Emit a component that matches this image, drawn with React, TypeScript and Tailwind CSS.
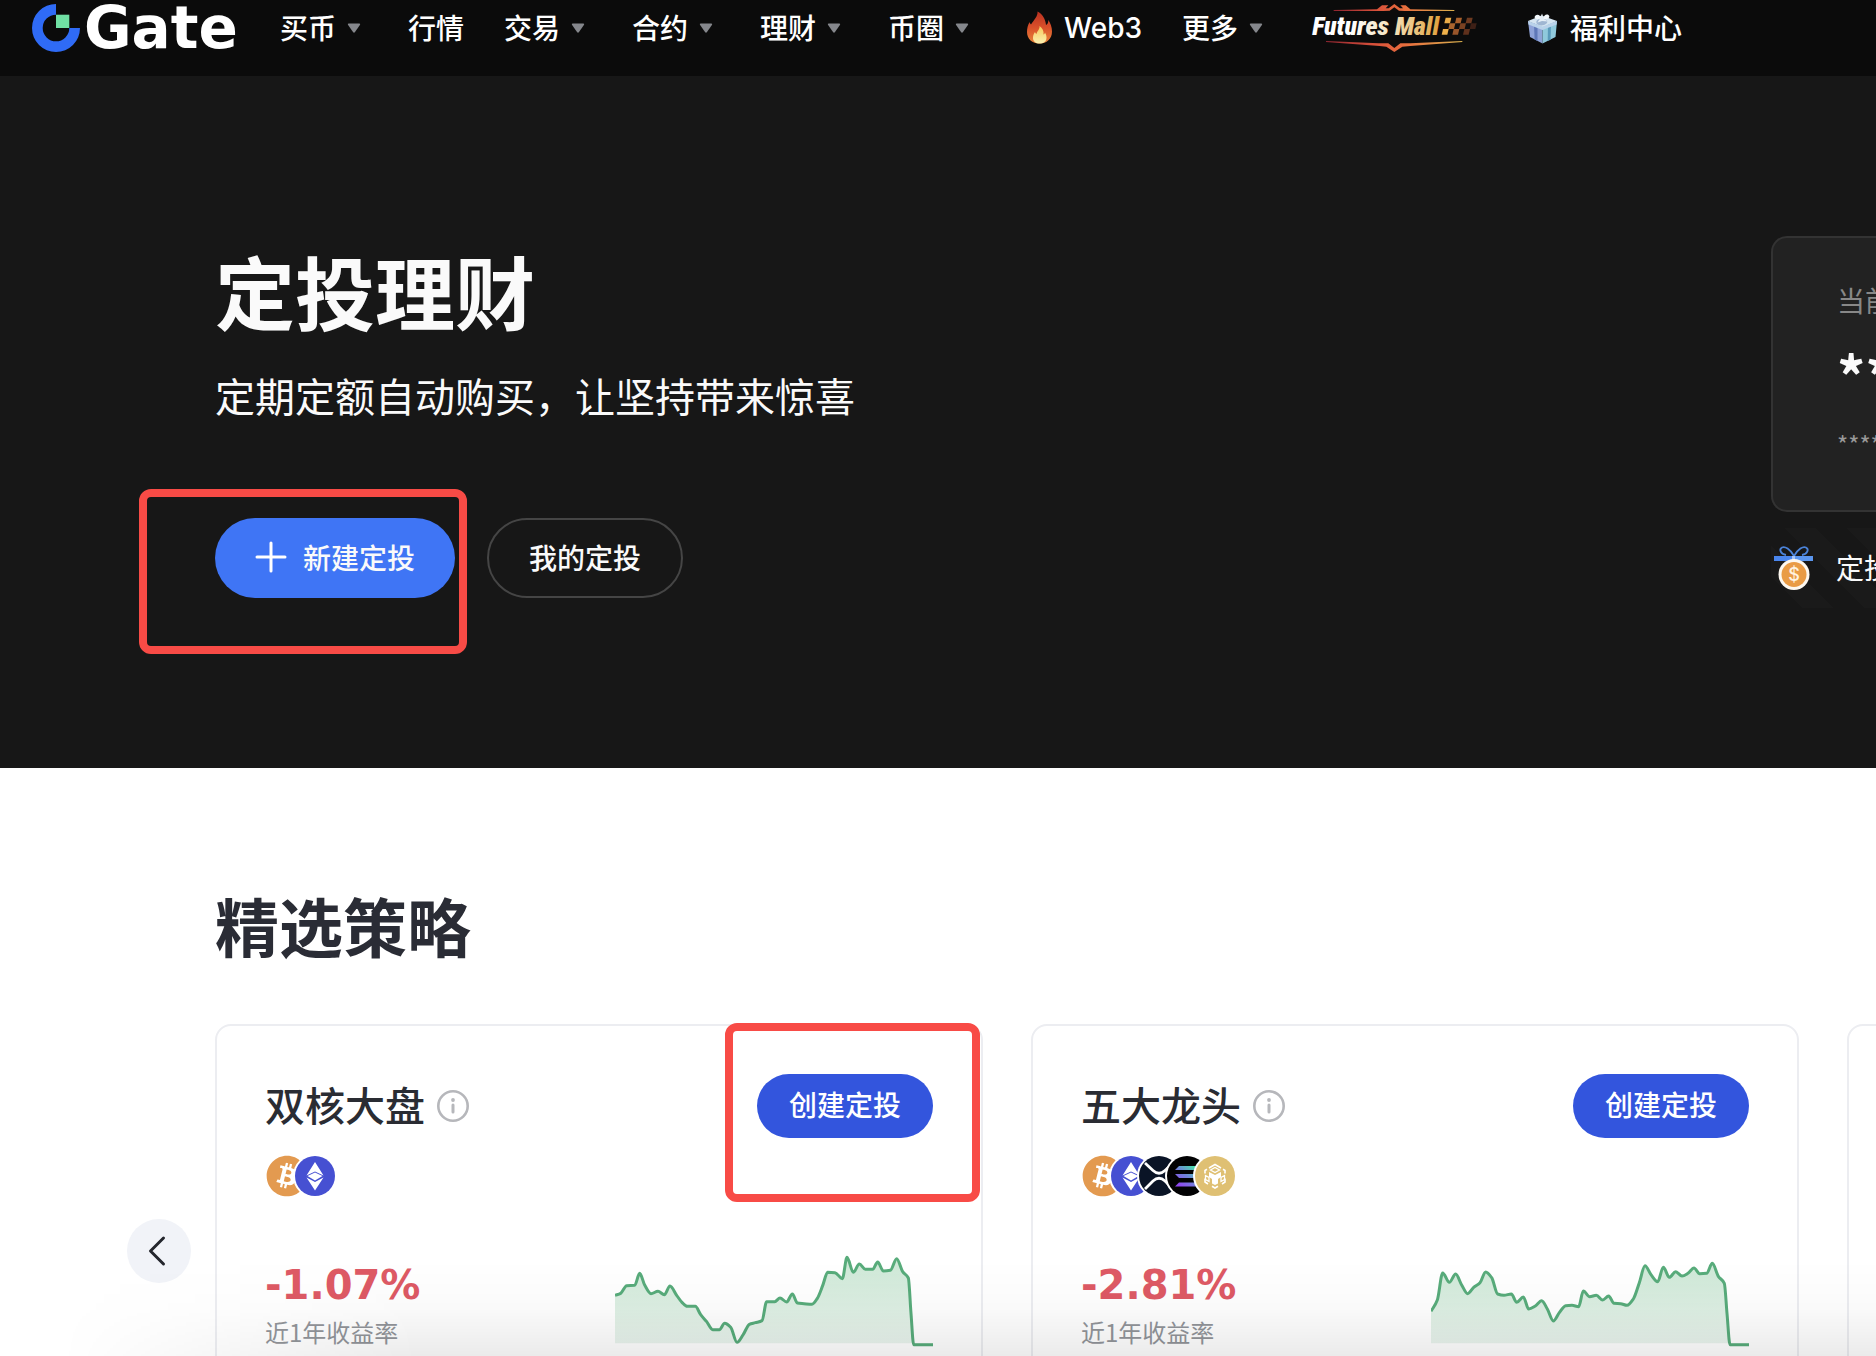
import type { ReactNode } from 'react';
import { FaBitcoin } from 'react-icons/fa';

type Point = [number, number];

const NAV_LEFT = [
  { label: '买币', menu: true },
  { label: '行情', menu: false },
  { label: '交易', menu: true },
  { label: '合约', menu: true },
  { label: '理财', menu: true },
  { label: '币圈', menu: true },
];

const DUAL_CORE: Point[] = [
  [0, 124], [17, 118], [35, 95], [59, 94], [74, 58], [89, 93], [108, 119], [129, 112], [148, 122], [165, 96],
  [185, 124], [201, 145], [217, 157], [241, 157], [257, 182], [275, 203], [293, 227], [313, 227], [329, 208],
  [347, 220], [366, 265], [385, 241], [403, 211], [421, 206], [441, 200], [455, 143], [479, 143], [495, 132],
  [515, 144], [532, 120], [547, 147], [567, 149], [591, 151], [607, 133], [623, 95], [638, 55], [660, 56],
  [682, 74], [696, 10], [715, 55], [733, 30], [751, 46], [773, 46], [788, 24], [805, 51], [826, 49], [845, 14],
  [863, 53], [880, 72], [888, 178], [896, 272], [954, 272],
];

const TOP_FIVE: Point[] = [
  [0, 172], [19, 138], [35, 57], [55, 85], [74, 60], [92, 93], [110, 119], [128, 100], [147, 86], [164, 54],
  [182, 71], [200, 120], [219, 124], [241, 120], [257, 145], [277, 129], [293, 165], [313, 156], [332, 140],
  [349, 165], [367, 201], [385, 176], [404, 155], [423, 154], [443, 158], [457, 111], [476, 128], [496, 124],
  [515, 138], [533, 126], [549, 148], [569, 149], [588, 154], [607, 135], [625, 86], [642, 35], [660, 62],
  [680, 83], [697, 40], [715, 70], [734, 53], [753, 66], [771, 58], [789, 42], [806, 59], [827, 58], [844, 28],
  [862, 67], [880, 88], [888, 178], [897, 272], [954, 272],
];

function monotonePath(pts: Point[]) {
  const slopes = pts.slice(1).map((p, i) => (p[1] - pts[i][1]) / (p[0] - pts[i][0]));
  const tangents = pts.map((_, i) => {
    if (i === 0) return slopes[0];
    if (i === pts.length - 1) return slopes[slopes.length - 1];
    const a = slopes[i - 1];
    const b = slopes[i];
    return a * b <= 0 ? 0 : (2 * a * b) / (a + b);
  });
  let d = `M${pts[0][0]} ${pts[0][1]}`;
  for (let i = 1; i < pts.length; i++) {
    const [x0, y0] = pts[i - 1];
    const [x1, y1] = pts[i];
    const h = (x1 - x0) / 3;
    d += `C${x0 + h} ${y0 + h * tangents[i - 1]} ${x1 - h} ${y1 - h * tangents[i]} ${x1} ${y1}`;
  }
  return d;
}

function Sparkline({ id, points }: { id: string; points: Point[] }) {
  const line = monotonePath(points);
  return (
    <svg viewBox="0 0 954 282" className="h-[94px] w-[318px] shrink-0" aria-hidden="true">
      <defs>
        <linearGradient id={id} x1="0" y1="0" x2="0" y2="1">
          <stop offset="0" stopColor="#cde8d6" />
          <stop offset="1" stopColor="#eaf5ee" />
        </linearGradient>
      </defs>
      <path d={`${line}V268H0Z`} fill={`url(#${id})`} />
      <path d={line} fill="none" stroke="#58ac7b" strokeWidth="9" strokeLinejoin="round" />
    </svg>
  );
}

function GateMark() {
  return (
    <svg viewBox="0 0 48 48" className="size-12 shrink-0" aria-hidden="true">
      <path d="M24 0A24 24 0 1 0 48 24H37.300A13.300 13.300 0 1 1 24 10.700Z" fill="#2f6bf6" />
      <path d="M24 10.700H37.300V24H24Z" fill="#70e0a4" />
    </svg>
  );
}

function Caret() {
  return (
    <svg viewBox="0 0 14 10" className="mr-[7px] ml-[11px] h-[10px] w-[14px]" aria-hidden="true">
      <path d="M1.800 0.500H12.200Q13.800 0.500 12.900 1.900L8 9.100Q7 10.300 6 9.100L1.100 1.900Q0.200 0.500 1.800 0.500Z" fill="#85878c" />
    </svg>
  );
}

function Flame() {
  return (
    <svg viewBox="0 0 32 36" className="h-9 w-8" aria-hidden="true">
      <defs>
        <linearGradient id="flame-outer" x1="0" y1="0" x2="0" y2="1">
          <stop offset="0" stopColor="#b93020" />
          <stop offset="0.500" stopColor="#d9502a" />
          <stop offset="1" stopColor="#e8863a" />
        </linearGradient>
        <linearGradient id="flame-inner" x1="0" y1="0" x2="0" y2="1">
          <stop offset="0" stopColor="#f6c95a" />
          <stop offset="1" stopColor="#fbf0b0" />
        </linearGradient>
      </defs>
      <path
        d="M13.500 1.500C14 6 10 10 7 14.500C6 13.600 5.800 12.800 5.700 12C3.800 15 3 18.500 3 22C3 29 8.300 33.500 15.500 33.500C22.700 33.500 28 29 28 21.500C28 17 26.500 13 24.300 10C24.400 12.500 23.600 14.300 22 15C21.500 9 18.500 4 13.500 1.500Z"
        fill="url(#flame-outer)"
      />
      <path
        d="M15.500 16C16 19.500 13 21 12.500 24C11.500 23.500 11.200 22.700 11 22C9.500 24 9 26 9 28C9 31.500 11.800 33.500 15.500 33.500C19.500 33.500 22.500 31.500 22.500 27.500C22.500 25.500 21.800 24 21 22.500C20.800 23.500 20.300 24.300 19.500 24.500C20 21 18.500 18 15.500 16Z"
        fill="url(#flame-inner)"
      />
    </svg>
  );
}

function GiftBox() {
  return (
    <svg viewBox="0 0 32 32" className="size-8" aria-hidden="true">
      <path d="M2 9L16.500 14.500V31.500L4 25Z" fill="#8fa3d8" />
      <path d="M31 9L16.500 14.500V31.500L29.500 25Z" fill="#8fc9dc" />
      <path d="M2 9L15.500 3.500L31 9L16.500 15.500Z" fill="#d5e5f1" />
      <path d="M8 11.500L11.500 13V29L8.600 27.500Z" fill="#5f78b8" />
      <path d="M22 13L25 11.700L24.600 27.700L21.700 29Z" fill="#5a9bbb" />
      <path d="M2 9L16.500 14.500V18L2.500 12.500ZM31 9L16.500 14.500V18L30.600 12.500Z" fill="#b9d2ea" />
      <path d="M15.500 7C10 8 7 6 9.500 3.500C12 1.500 15 4 15.500 7ZM17 7C22 8 25 5 22.500 3C20 1.500 17.500 4 17 7Z" fill="#f3f8fc" />
      <path d="M11 12C9 9 12 6.500 16 6.800C20 7 23 9 20.500 11.500C18 14 13 14 11 12Z" fill="#9fb6d2" />
      <path d="M16 1.500L18 7L22 9.500L16 9L11.500 10.500L14 6.500Z" fill="#e6eff7" />
    </svg>
  );
}

const CHECKS = [
  [0, 0, '#e9ac48'], [0, 2, '#eeb04a'], [1, 1, '#a8642e'], [2, 0, '#a8602c'], [2, 2, '#98552a'], [3, 1, '#7a4222'],
  [4, 0, '#6e3a20'], [4, 2, '#5e301c'], [5, 1, '#3e2016'],
] as const;

function FuturesMall() {
  return (
    <svg viewBox="27 0 528 168" className="h-14 w-[176px]" role="img" aria-label="Futures Mall">
      <defs>
        <linearGradient id="mall-frame" x1="0" y1="0" x2="1" y2="0">
          <stop offset="0" stopColor="#8e2430" />
          <stop offset="0.350" stopColor="#d8503a" />
          <stop offset="0.600" stopColor="#e8703e" />
          <stop offset="1" stopColor="#d9b04e" />
        </linearGradient>
        <linearGradient id="mall-text" x1="0" y1="0" x2="1" y2="0">
          <stop offset="0.300" stopColor="#ffffff" />
          <stop offset="0.650" stopColor="#f3dfb4" />
          <stop offset="1" stopColor="#e0a03c" />
        </linearGradient>
      </defs>
      <path
        d="M98 30L228 28L243 16H262L254 25H263L280 12L297 25H306L298 16H314L328 28L460 30V33H312L294 32L280 22L266 32L246 33H98Z"
        fill="url(#mall-frame)"
      />
      <path
        d="M75 123L232 130H262L280 144L298 130H328L484 123V126L328 138L304 140L280 156L256 140L236 138L75 126Z"
        fill="url(#mall-frame)"
      />
      <text
        x="34"
        y="106"
        fontSize="78"
        fontWeight="900"
        fontStyle="italic"
        fontFamily="'Roboto Condensed', 'Liberation Sans Narrow', 'Liberation Sans', sans-serif"
        fill="url(#mall-text)"
      >
        Futures Mall
      </text>
      {CHECKS.map(([column, row, fill]) => {
        const x = 434 + column * 16 - row * 4;
        const y = 53 + row * 17;
        return <path key={`${column}-${row}`} d={`M${x} ${y}h17l-4 17h-17Z`} fill={fill} />;
      })}
    </svg>
  );
}

function MedalIcon() {
  return (
    <svg viewBox="0 0 40 46" className="h-[46px] w-10 shrink-0" aria-hidden="true">
      <path d="M20 11C16 4 11 1 8 2.500C5 4 6 9 12 10M20 11C24 4 29 1 32 2.500C35 4 34 9 28 10" fill="none" stroke="#4b83d8" strokeWidth="1.800" />
      <path d="M0 11H18V16H0Z" fill="#4a86ee" />
      <path d="M18 11H21V16H18Z" fill="#a9c6f5" />
      <path d="M21 11H39V16H21Z" fill="#5b96ee" />
      <circle cx="20" cy="29.500" r="15.500" fill="#fdf8f0" />
      <circle cx="20" cy="29.500" r="12.500" fill="#e99b45" />
      <text x="20" y="36" textAnchor="middle" fontSize="18" fontWeight="500" fontFamily="Inter, sans-serif" fill="#fff3e0">
        $
      </text>
    </svg>
  );
}

function InfoIcon() {
  return (
    <svg viewBox="0 0 32 32" className="size-8" aria-hidden="true">
      <circle cx="16" cy="16" r="14.700" fill="none" stroke="#b6b7bb" strokeWidth="2.600" />
      <circle cx="16" cy="10" r="1.900" fill="#b6b7bb" />
      <path d="M16 15V22" stroke="#b6b7bb" strokeWidth="3" strokeLinecap="round" />
    </svg>
  );
}

const COIN_ART: Record<string, ReactNode> = {
  BTC: <FaBitcoin className="-m-px size-[42px] text-[#e39a50]" />,
  ETH: (
    <svg viewBox="0 0 40 40" className="size-10">
      <circle cx="20" cy="20" r="20" fill="#4650d2" />
      <path d="M20 6L28.500 19.500L20 15.500L11.500 19.500Z" fill="#fff" />
      <path d="M20 16.500L27.500 20L20 24.500L12.500 20Z" fill="#fff" />
      <path d="M11.500 21.500L20 26L28.500 21.500L20 34.500Z" fill="#fff" />
    </svg>
  ),
  XRP: (
    <svg viewBox="0 0 40 40" className="size-10">
      <circle cx="20" cy="20" r="20" fill="#0a1426" />
      <path d="M6 7L14 14.500Q20 20 26 14.500L34 7M6 33L14 25Q20 19.500 26 25L34 33" fill="none" stroke="#fff" strokeWidth="2.800" />
    </svg>
  ),
  SOL: (
    <svg viewBox="0 0 40 40" className="size-10">
      <defs>
        <linearGradient id="sol" x1="0" y1="1" x2="1" y2="0">
          <stop offset="0.100" stopColor="#9045f0" />
          <stop offset="0.500" stopColor="#6f86d8" />
          <stop offset="0.900" stopColor="#45e5a8" />
        </linearGradient>
      </defs>
      <circle cx="20" cy="20" r="20" fill="#020203" />
      <path d="M12 10H33L29 14H8ZM8 18H29L33 22H12ZM12 26.500H33L29 30.500H8Z" fill="url(#sol)" />
    </svg>
  ),
  BNB: (
    <svg viewBox="0 0 40 40" className="size-10">
      <circle cx="20" cy="20" r="20" fill="#dfc073" />
      <path d="M14 12L20 8.500L26 12M10 17.500V14.500L12 13.300M10 22.500V26L13 28M30 17.500V14.500L28 13.300M30 22.500V26L27 28M17 30.200L20 32L23 30.200" fill="none" stroke="#fff" strokeWidth="1.600" />
      <path d="M15.500 14L20 11.500L24.500 14L20 16.500ZM10.500 19.500L14 21.500V25.500L10.500 23.500ZM29.500 19.500L26 21.500V25.500L29.500 23.500Z" fill="none" stroke="#fff" strokeWidth="1.300" />
      <path d="M14 16L20 19L26 16V21L23 23V27.500L20 29L17 27.500V23L14 21Z" fill="#fff" />
    </svg>
  ),
};

function RedFrame({ className }: { className: string }) {
  return <div className={`pointer-events-none absolute rounded-xl border-8 border-[#f84b46] ${className}`} aria-hidden="true" />;
}

interface Strategy {
  id: string;
  name: string;
  coins: string[];
  rate: string;
  points: Point[];
  framed: boolean;
}

const STRATEGIES: Strategy[] = [
  { id: 'dual-core', name: '双核大盘', coins: ['BTC', 'ETH'], rate: '-1.07%', points: DUAL_CORE, framed: true },
  { id: 'top-five', name: '五大龙头', coins: ['BTC', 'ETH', 'XRP', 'SOL', 'BNB'], rate: '-2.81%', points: TOP_FIVE, framed: false },
];

function StrategyCard({ strategy }: { strategy: Strategy }) {
  return (
    <article className="w-[768px] shrink-0 rounded-2xl border-2 border-[#ecedf1] p-12">
      <div className="flex items-center justify-between">
        <div className="flex items-center gap-3">
          <h3 className="pb-1 text-[40px] leading-[56px] font-medium text-[#2a2c33]">{strategy.name}</h3>
          <button type="button" aria-label={`${strategy.name}说明`}>
            <InfoIcon />
          </button>
        </div>
        <div className="relative">
          <button type="button" className="h-16 rounded-full bg-[#3355dd] px-8 pb-1 text-[28px] leading-10 font-medium text-white">
            创建定投
          </button>
          {strategy.framed && <RedFrame className="-top-[51px] -right-[47px] -bottom-16 -left-8" />}
        </div>
      </div>
      <ul className="mt-[18px] ml-0.5 flex">
        {strategy.coins.map((coin) => (
          <li key={coin} className="-mr-3 size-10 rounded-full bg-white ring-2 ring-white" aria-label={coin}>
            {COIN_ART[coin]}
          </li>
        ))}
      </ul>
      <div className="mt-[58px] flex justify-between">
        <div>
          <p className="font-['DejaVu_Sans'] text-[40px] leading-[62px] font-bold text-[#de5a65]">{strategy.rate}</p>
          <p className="text-2xl leading-8 text-[#92959a]">近1年收益率</p>
        </div>
        <Sparkline id={strategy.id} points={strategy.points} />
      </div>
    </article>
  );
}

export default function App() {
  return (
    <div className="relative h-screen overflow-hidden bg-white font-['Noto_Sans_CJK_SC',sans-serif]">
      <header className="flex h-[76px] items-center bg-[#0b0b0b] pb-5 pl-8 whitespace-nowrap text-white">
        <a href="#home" className="flex w-[248px] items-center gap-1" aria-label="Gate">
          <GateMark />
          <span className="font-['DejaVu_Sans'] text-[58px] leading-14 font-bold">Gate</span>
        </a>
        <nav className="flex items-center gap-10 text-[28px] leading-10 font-medium">
          {NAV_LEFT.map((item) => (
            <a key={item.label} href="#nav" className="flex items-center">
              <span className="pb-0.5">{item.label}</span>
              {item.menu && <Caret />}
            </a>
          ))}
          <a href="#web3" className="ml-2 flex items-center gap-2">
            <Flame />
            <span className="font-[Inter]">Web3</span>
          </a>
          <a href="#more" className="flex items-center">
            <span className="pb-0.5">更多</span>
            <Caret />
          </a>
          <a href="#mall">
            <FuturesMall />
          </a>
          <a href="#rewards" className="flex items-center gap-3">
            <GiftBox />
            <span className="pb-0.5">福利中心</span>
          </a>
        </nav>
      </header>

      <section className="flex justify-between bg-[#171717] pl-[215px] text-[#fafafa]">
        <div className="pt-[165px] pb-[170px]">
          <h1 className="text-[80px] leading-[96px] font-bold">定投理财</h1>
          <p className="mt-[30px] text-[40px] leading-14">定期定额自动购买，让坚持带来惊喜</p>
          <div className="mt-[95px] flex gap-8 text-[28px] leading-10 font-medium">
            <div className="relative">
              <button type="button" className="flex h-20 items-center gap-4 rounded-full bg-[#3f75f5] px-10 pb-0.5">
                <svg viewBox="0 0 32 32" className="size-8" aria-hidden="true">
                  <path d="M16 2V30M2 16H30" stroke="#fff" strokeWidth="3" strokeLinecap="round" />
                </svg>
                新建定投
              </button>
              <RedFrame className="-top-[29px] -right-3 -bottom-14 -left-[76px]" />
            </div>
            <button type="button" className="h-20 rounded-full border-2 border-[#454545] px-10 pb-0.5">
              我的定投
            </button>
          </div>
        </div>
        <aside className="w-[105px] overflow-hidden pt-40 whitespace-nowrap">
          <div className="h-[276px] rounded-l-2xl border-2 border-r-0 border-[#333333] bg-[#222222] pt-[42px] pl-16">
            <p className="text-[28px] leading-10 text-[#888888]">当前</p>
            <p className="mt-6 text-[56px] leading-[60px] font-bold">**</p>
            <p className="mt-6 text-2xl leading-8 text-[#999999]">****</p>
          </div>
          <div className="mt-4 flex h-20 items-center gap-[22px] bg-[repeating-linear-gradient(45deg,#171717_0px,#171717_22px,#1a1a1a_22px,#1a1a1a_44px)] pl-[3px] text-[28px] leading-10">
            <MedalIcon />
            <span className="pb-0.5">定投</span>
          </div>
        </aside>
      </section>

      <section className="pt-[116px] pl-[215px]">
        <h2 className="text-[64px] leading-[80px] font-bold text-[#2a2c35]">精选策略</h2>
        <div className="relative mt-[60px]">
          <button
            type="button"
            aria-label="上一页"
            className="absolute top-[195px] -left-[88px] flex size-16 items-center justify-center rounded-full bg-[#f1f3f8]"
          >
            <svg viewBox="0 0 32 32" className="size-8" aria-hidden="true">
              <path d="M20.500 3L7.500 16L20.500 29" fill="none" stroke="#24262d" strokeWidth="3" strokeLinecap="round" strokeLinejoin="round" />
            </svg>
          </button>
          <div className="flex gap-12">
            {STRATEGIES.map((strategy) => (
              <StrategyCard key={strategy.id} strategy={strategy} />
            ))}
            <div className="w-[768px] shrink-0 rounded-2xl border-2 border-[#ecedf1]" />
          </div>
        </div>
      </section>

      <div className="pointer-events-none absolute inset-x-0 bottom-0 h-24 bg-[linear-gradient(to_bottom,transparent,rgb(0_0_0/0.02)_50%,rgb(0_0_0/0.08))] [mask-image:linear-gradient(to_right,transparent_60px,black_420px)]" />
    </div>
  );
}
